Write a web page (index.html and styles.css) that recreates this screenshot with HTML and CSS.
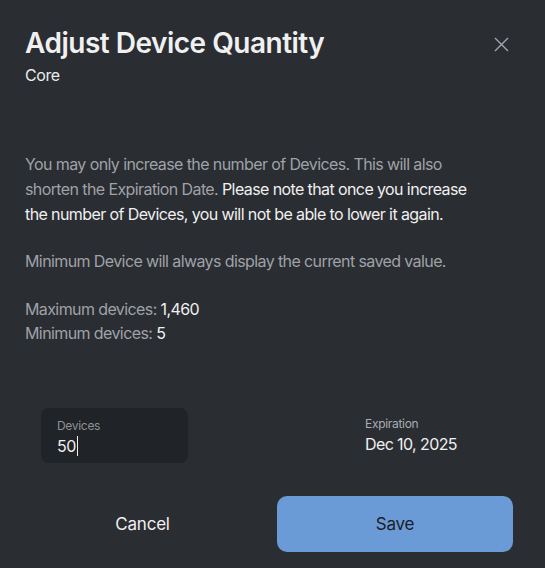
FILE: index.html
```html
<!DOCTYPE html>
<html lang="en">
<head>
    <meta charset="UTF-8">
    <meta name="viewport" content="width=device-width, initial-scale=1.0">
    <title>Adjust Device Quantity</title>
    <link rel="stylesheet" href="styles.css">
</head>
<body>
    <div class="dialog">
        <div class="dialog-header">
            <div>
                <h1>Adjust Device Quantity</h1>
                <p class="subtitle">Core</p>
            </div>
            <button class="close-btn" aria-label="Close">
                <svg width="15" height="15" viewBox="0 0 15 15"><path d="M1 1L14 14M14 1L1 14" stroke="#a3a6ab" stroke-width="1.4" fill="none"/></svg>
            </button>
        </div>

        <div class="dialog-body">
            <p class="note">You may only increase the number of Devices. This will also shorten the Expiration Date. <span class="strong">Please note that once you increase the number of Devices, you will not be able to lower it again.</span></p>
            <p class="note">Minimum Device will always display the current saved value.</p>
            <p class="limits">Maximum devices: <span class="strong">1,460</span><br>Minimum devices: <span class="strong">5</span></p>
        </div>

        <div class="fields">
            <div class="field-box">
                <label for="devices">Devices</label>
                <div class="field-value">50<span class="caret"></span></div>
            </div>
            <div class="field-static">
                <div class="field-label">Expiration</div>
                <div class="field-value">Dec 10, 2025</div>
            </div>
        </div>

        <div class="actions">
            <button class="btn-cancel">Cancel</button>
            <button class="btn-save">Save</button>
        </div>
    </div>
</body>
</html>
```

FILE: styles.css
```css
body {
    margin: 0;
    background-color: #2a2d32;
    font-family: Inter, "Noto Sans", sans-serif;
    color: #f0f0f0;
}
.dialog {
    padding: 27px 25px 17px 25px;
}
.dialog-header {
    display: flex;
    justify-content: space-between;
    align-items: flex-start;
}
h1 {
    margin: 0;
    font-size: 28px;
    line-height: 32px;
    font-weight: 600;
    letter-spacing: -0.5px;
    color: #f0f0f0;
}
.subtitle {
    margin: 5px 0 0 0;
    font-size: 16px;
    line-height: 22px;
    letter-spacing: -0.4px;
    color: #ececec;
}
.close-btn {
    background: none;
    border: none;
    padding: 0;
    margin: 10px 11px 0 0;
    cursor: pointer;
}
.dialog-body {
    padding-top: 66px;
    font-size: 16px;
    letter-spacing: -0.6px;
}
.note {
    max-width: 446px;
    margin: 0 0 22px 0;
    line-height: 25px;
    color: #9fa2a7;
}
.strong {
    color: #f0f0f0;
}
.limits {
    margin: 23px 0 0 0;
    line-height: 24px;
    color: #9fa2a7;
}
.fields {
    display: flex;
    align-items: flex-start;
    margin-top: 63px;
    padding-left: 16px;
}
.field-box {
    width: 147px;
    height: 55px;
    box-sizing: border-box;
    background: #202327;
    border-radius: 8px;
    padding: 10px 16px;
}
.field-box label,
.field-label {
    display: block;
    font-size: 12px;
    line-height: 15px;
    letter-spacing: -0.3px;
    color: #8e9196;
}
.field-static {
    margin-left: 177px;
    padding-top: 8px;
}
.field-static .field-label {
    color: #a9acb1;
}
.field-value {
    font-size: 16px;
    line-height: 22px;
    letter-spacing: -0.6px;
    margin-top: 2px;
    color: #f0f0f0;
}
.caret {
    display: inline-block;
    width: 1px;
    height: 20px;
    background: #f0f0f0;
    vertical-align: -4px;
    margin-left: 1px;
}
.actions {
    display: flex;
    align-items: center;
    margin-top: 33px;
}
.actions button {
    font-family: inherit;
    font-size: 17px;
    letter-spacing: -0.2px;
    border: none;
    cursor: pointer;
}
.btn-cancel {
    background: none;
    color: #f0f0f0;
    width: 235px;
    height: 55px;
}
.btn-save {
    margin-left: 17px;
    width: 236px;
    height: 56px;
    background: #6b9bd6;
    color: #1c2026;
    border-radius: 10px;
}
```
